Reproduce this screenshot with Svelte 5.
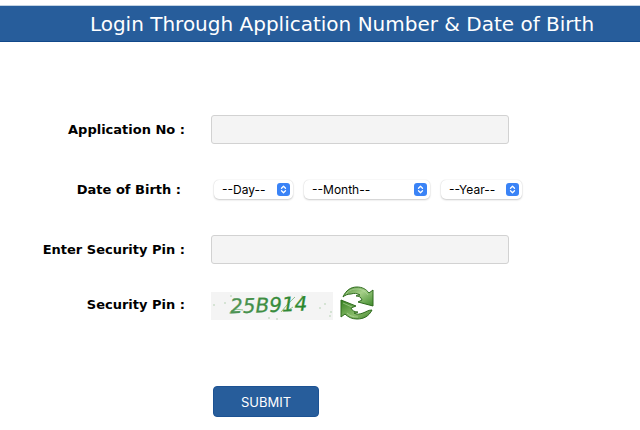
<script lang="ts">
  let applicationNo = $state('')
  let pin = $state('')
  let day = $state('')
  let month = $state('')
  let year = $state('')

  const range = (from: number, count: number) => Array.from({ length: count }, (_, i) => String(from + i))

  const dateParts = [
    { id: 'day', text: '--Day--', options: range(1, 31), get: () => day, set: (v: string) => (day = v) },
    { id: 'month', text: '--Month--', options: range(1, 12), get: () => month, set: (v: string) => (month = v) },
    { id: 'year', text: '--Year--', options: range(1980, 30), get: () => year, set: (v: string) => (year = v) },
  ]

  const specks = [
    [3, 13, 1], [20, 4, 1], [14, 11, 1], [19, 21, 1], [58, 26, 1],
    [66, 27, 1], [91, 4, 1], [109, 16, 1], [114, 12, 1], [119, 24, 1], [120, 20, 1],
  ]
</script>

<main>
  <h1>Login Through Application Number &amp; Date of Birth</h1>

  <form onsubmit={(e) => e.preventDefault()}>
    <div class="row">
      <label for="application-no">Application No :</label>
      <input id="application-no" type="text" autocomplete="off" bind:value={applicationNo} />
    </div>

    <div class="row date">
      <label for="day">Date of Birth :</label>
      <div class="selects">
        {#each dateParts as part}
          <div class="select {part.id}">
            <select id={part.id} aria-label={part.id} value={part.get()} onchange={(e) => part.set(e.currentTarget.value)}>
              <option value="">{part.text}</option>
              {#each part.options as option}
                <option value={option}>{option}</option>
              {/each}
            </select>
            <svg class="stepper" viewBox="0 0 13 13" aria-hidden="true">
              <path d="M4.5 5.2l2-2 2 2M4.5 7.8l2 2 2-2" />
            </svg>
          </div>
        {/each}
      </div>
    </div>

    <div class="row">
      <label for="pin">Enter Security Pin :</label>
      <input id="pin" type="text" autocomplete="off" bind:value={pin} />
    </div>

    <div class="row captcha-row">
      <span class="label">Security Pin :</span>
      <div class="captcha">
        <svg class="code" viewBox="0 0 122 28" role="img" aria-label="Security pin">
          <defs>
            <linearGradient id="ink" x1="0" y1="0" x2="1" y2="0">
              <stop offset="0" stop-color="#4f9456" />
              <stop offset="1" stop-color="#28862a" />
            </linearGradient>
          </defs>
          {#each specks as [x, y, r]}
            <circle cx={x} cy={y} {r} />
          {/each}
          <path class="scratch" d="M20 19q6-3 12-1M70 20q8-10 14-15M76 19l6-4" />
          <text x="19" y="20" transform="rotate(-2 58 14)">25B914</text>
        </svg>
        <button class="refresh" type="button" aria-label="Refresh security pin">
          <svg viewBox="0 0 34 34" aria-hidden="true">
            <defs>
              <linearGradient id="leaf-top" x1="0" y1="0" x2="1" y2="1">
                <stop offset="0" stop-color="#4b8c35" />
                <stop offset="0.45" stop-color="#a5cf88" />
                <stop offset="1" stop-color="#3f8a2b" />
              </linearGradient>
              <linearGradient id="leaf-bottom" x1="0" y1="0" x2="1" y2="1">
                <stop offset="0" stop-color="#35801f" />
                <stop offset="0.6" stop-color="#8abd6b" />
                <stop offset="1" stop-color="#408029" />
              </linearGradient>
            </defs>
            <path
              fill="url(#leaf-top)"
              d="M3 11C6 4 11 1 17 1c5 0 9 2 12 6l4-3v16l-15-4 4-2c-1-3-3-4-6-4 1-1 2-1 4-1-3-2-6-2-9-1-3 0-6 1-8 3z"
            />
            <path
              fill="url(#leaf-bottom)"
              d="M1 14l15 6-5 2c1 3 4 4 7 4-1 1-2 1-4 1 3 2 6 1 9 0 3-1 5-3 9-3-3 6-8 9-15 9-5 0-9-2-12-5l-4 3z"
            />
            <path class="shine" d="M6 8C9 4 13 3 17 3c4 0 8 2 11 6M3 17l9 4M7 27c3 3 6 4 11 4" />
          </svg>
        </button>
      </div>
    </div>

    <div class="row actions">
      <button class="submit" type="submit">SUBMIT</button>
    </div>
  </form>
</main>

<style>
  :global(body) {
    margin: 0;
    background: #fff;
    color: #000;
    font-family: Verdana, 'DejaVu Sans', sans-serif;
  }

  main {
    padding-top: 5px;
  }

  h1 {
    box-sizing: border-box;
    margin: 0;
    padding: 2px 0 0 44px;
    border-top: 1px solid #c3d3e3;
    border-bottom: 1px solid #11498a;
    background: #275d9b;
    color: #fff;
    font-size: 20px;
    font-weight: 400;
    line-height: 33px;
    text-align: center;
  }

  form {
    display: flex;
    flex-direction: column;
    gap: 31px;
    padding: 73px 16px 0 0;
  }

  .row {
    display: grid;
    grid-template-columns: 185px minmax(0, 298px);
    column-gap: 26px;
    align-items: center;
    min-height: 29px;
  }

  label,
  .label {
    font-size: 13px;
    font-weight: 700;
    line-height: 16px;
    text-align: right;
  }

  .date label {
    padding-right: 4px;
  }

  input {
    box-sizing: border-box;
    width: 100%;
    height: 29px;
    padding: 0 8px;
    border: 1px solid #d2d2d2;
    border-radius: 3px;
    background: #f4f4f4;
    font: inherit;
    font-size: 13px;
  }

  .selects {
    display: flex;
    gap: 11px;
    padding-left: 3px;
  }

  .select {
    position: relative;
    flex: none;
  }

  .day {
    width: 79px;
  }

  .month {
    width: 126px;
  }

  .year {
    width: 81px;
  }

  select {
    display: block;
    width: 100%;
    height: 19px;
    padding: 0 20px 0 8px;
    appearance: none;
    border: 0;
    border-radius: 5px;
    background: #fff;
    box-shadow: 0 0 1px #ccc, 0 1px 2px #ccc;
    color: #000;
    font-family: Inter, sans-serif;
    font-size: 12px;
    line-height: 19px;
  }

  .stepper {
    position: absolute;
    top: 3px;
    right: 3px;
    width: 13px;
    height: 13px;
    border-radius: 3px;
    background: #3a83f6;
    pointer-events: none;
  }

  .stepper path {
    fill: none;
    stroke: #fff;
    stroke-width: 1.3;
    stroke-linecap: round;
    stroke-linejoin: round;
  }

  .captcha-row {
    align-items: end;
    margin-top: -9px;
  }

  .captcha-row .label {
    padding-bottom: 7px;
  }

  .captcha {
    display: flex;
    gap: 7px;
    align-items: flex-end;
  }

  .code {
    width: 122px;
    height: 28px;
    overflow: visible;
    background: #f4f4f4;
  }

  .code circle {
    fill: #b9d3b7;
    opacity: 0.7;
  }

  .code text {
    fill: url(#ink);
    stroke: url(#ink);
    stroke-width: 0.3;
    font-family: 'DejaVu Sans', sans-serif;
    font-size: 20px;
    font-style: italic;
  }

  .scratch {
    fill: none;
    stroke: #8fc08c;
    stroke-width: 1;
  }

  .refresh {
    width: 34px;
    height: 34px;
    padding: 0;
    border: 0;
    background: none;
    cursor: pointer;
  }

  .refresh svg {
    display: block;
    width: 100%;
    height: 100%;
  }

  .refresh path {
    stroke: #2e6b1d;
    stroke-width: 1;
    stroke-linejoin: round;
  }

  .refresh .shine {
    fill: none;
    stroke: #b9dba6;
    opacity: 0.6;
  }

  .actions {
    margin-top: 35px;
  }

  .submit {
    grid-column: 2;
    justify-self: start;
    height: 31px;
    margin-left: 2px;
    padding: 0 27px;
    border: 1px solid #1c5293;
    border-radius: 4px;
    background: #275d9b;
    color: #fff;
    font-family: Inter, sans-serif;
    font-size: 13px;
    cursor: pointer;
  }
</style>
